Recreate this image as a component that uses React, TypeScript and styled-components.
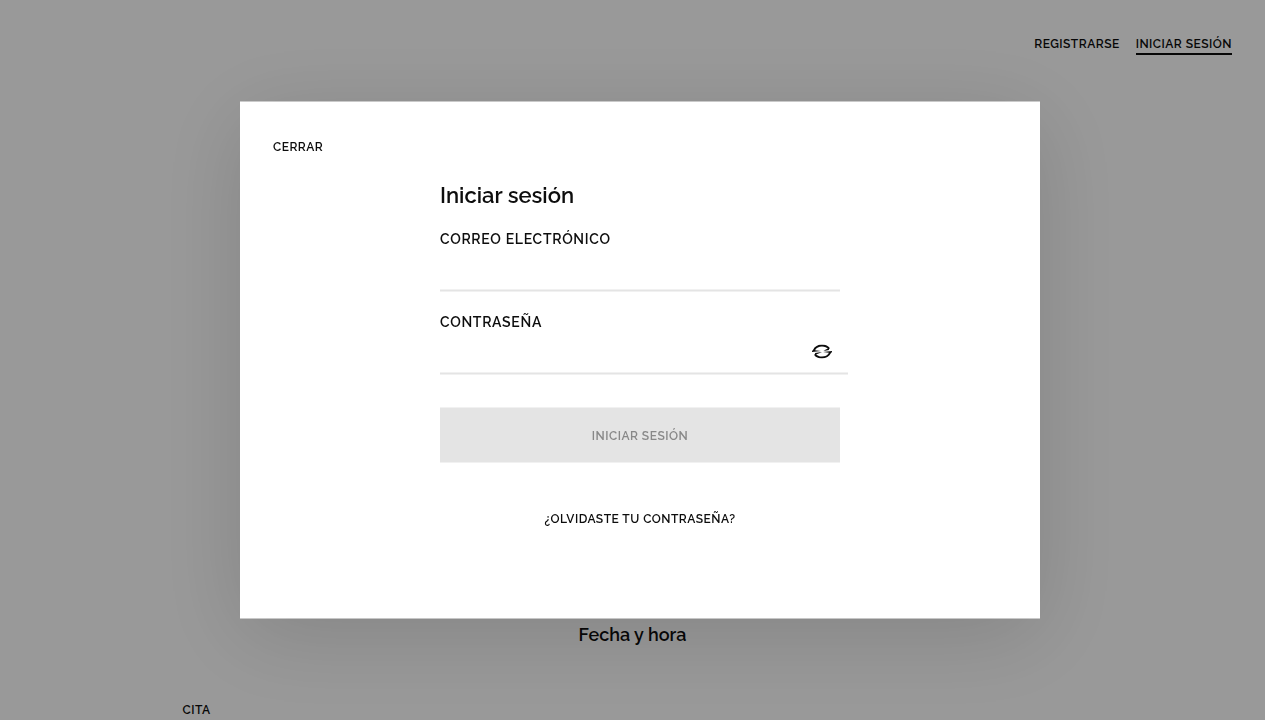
import React, { useId, useState } from "react";
import styled, { createGlobalStyle, css } from "styled-components";

const ink = "#0d0d0d";
const line = "#e4e4e4";

const GlobalStyle = createGlobalStyle`
  *, *::before, *::after { box-sizing: border-box; }
  body {
    margin: 0;
    background: #ffffff;
    color: ${ink};
    font-family: Raleway, Lato, "Open Sans", sans-serif;
    font-weight: 500;
    overflow: hidden;
  }
`;

const smallCaps = css`
  font-family: inherit;
  font-size: 12px;
  line-height: 16px;
  font-weight: 600;
  letter-spacing: 0.04em;
  text-transform: uppercase;
  color: ${ink};
`;

const Page = styled.div`
  height: 100vh;
  margin-right: 15px;
  overflow: hidden;
`;

const Header = styled.header`
  display: flex;
  justify-content: flex-end;
  padding: 36px 33px 0;
`;

const Nav = styled.nav`
  display: flex;
  gap: 16px;
`;

const NavLink = styled.a<{ $active?: boolean }>`
  ${smallCaps}
  padding-bottom: 1px;
  border-bottom: 2px solid ${(p) => (p.$active ? ink : "transparent")};
  text-decoration: none;
`;

const Booking = styled.main`
  max-width: 900px;
  margin: 0 auto;
  padding-top: 568px;
`;

const SectionTitle = styled.h2`
  margin: 0 0 55px;
  font-size: 18px;
  line-height: 24px;
  font-weight: 600;
  text-align: center;
`;

const SectionLabel = styled.h3`
  ${smallCaps}
  margin: 0;
`;

const Overlay = styled.div`
  position: fixed;
  inset: 0 15px 0 0;
  background: rgba(0, 0, 0, 0.4);
`;

const Dialog = styled.section`
  position: fixed;
  top: 50%;
  left: 50%;
  transform: translate(-50%, -50%);
  width: 800px;
  max-width: 100%;
  padding: 37px 33px 92px;
  background: #ffffff;
  box-shadow: 0 16px 84px rgba(0, 0, 0, 0.14);
`;

const TextButton = styled.button`
  ${smallCaps}
  display: block;
  padding: 0;
  border: 0;
  background: none;
  cursor: pointer;
`;

const Form = styled.form`
  width: 400px;
  max-width: 100%;
  margin: 24px auto 0;
`;

const Title = styled.h1`
  margin: 0 0 18px;
  font-size: 22px;
  line-height: 32px;
  font-weight: 600;
`;

const Field = styled.div`
  margin-bottom: 20px;
`;

const Label = styled.label`
  display: block;
  font-size: 14px;
  line-height: 20px;
  font-weight: 600;
  letter-spacing: 0.05em;
  text-transform: uppercase;
`;

const InputRow = styled.div<{ $wide?: boolean }>`
  display: flex;
  align-items: center;
  height: 43px;
  margin-right: ${(p) => (p.$wide ? "-8px" : "0")};
  padding-right: ${(p) => (p.$wide ? "16px" : "0")};
  border-bottom: 2px solid ${line};
`;

const Input = styled.input`
  flex: 1;
  min-width: 0;
  height: 100%;
  padding: 0;
  border: 0;
  outline: 0;
  background: transparent;
  font: inherit;
  font-size: 16px;
`;

const IconButton = styled.button`
  display: flex;
  padding: 0 0 2px;
  border: 0;
  background: none;
  cursor: pointer;
`;

const Submit = styled.button`
  ${smallCaps}
  width: 100%;
  height: 55px;
  margin-top: 13px;
  border: 0;
  background: ${line};
  color: #888888;
`;

const Forgot = styled.a`
  ${smallCaps}
  display: block;
  width: fit-content;
  margin: 48px auto 0;
  text-decoration: none;
`;

const EyeIcon = () => (
  <svg width="20" height="14" viewBox="0 0 20 14" fill={ink} aria-hidden="true">
    <path d="M1 5.400C2.600 1.900 6 0 10 0c3.600 0 6.400 1.300 8 3.800l-1.800 1C15 2.900 12.800 2 10 2 6.800 2 4.600 3.100 3 5.800L9 6.400 0 7.600V6.400z" />
    <path d="M19 8.600C17.400 12.100 14 14 10 14c-3.600 0-6.400-1.300-8-3.800l1.800-1C5 11.100 7.200 12 10 12c3.200 0 5.400-1.100 7-3.800L11 7.600l9-1.200v1.200z" />
    <path d="M3 8.500 10 7.400 7.200 8.800 3.200 10.200zM17 5.500 11.500 6.400 13.800 5 16.800 3.800z" />
  </svg>
);

export default function App() {
  const id = useId();
  const [email, setEmail] = useState("");
  const [password, setPassword] = useState("");
  const [visible, setVisible] = useState(false);

  return (
    <>
      <GlobalStyle />
      <Page>
        <Header>
          <Nav>
            <NavLink href="#registro">Registrarse</NavLink>
            <NavLink href="#sesion" $active>Iniciar sesión</NavLink>
          </Nav>
        </Header>
        <Booking>
          <SectionTitle>Fecha y hora</SectionTitle>
          <SectionLabel>Cita</SectionLabel>
        </Booking>
      </Page>
      <Overlay />
      <Dialog role="dialog" aria-modal="true" aria-labelledby={`${id}-title`}>
        <TextButton type="button">Cerrar</TextButton>
        <Form onSubmit={(e) => e.preventDefault()}>
          <Title id={`${id}-title`}>Iniciar sesión</Title>
          <Field>
            <Label htmlFor={`${id}-email`}>Correo electrónico</Label>
            <InputRow>
              <Input id={`${id}-email`} type="email" value={email} onChange={(e) => setEmail(e.target.value)} />
            </InputRow>
          </Field>
          <Field>
            <Label htmlFor={`${id}-password`}>Contraseña</Label>
            <InputRow $wide>
              <Input
                id={`${id}-password`}
                type={visible ? "text" : "password"}
                value={password}
                onChange={(e) => setPassword(e.target.value)}
              />
              <IconButton type="button" aria-label="Mostrar contraseña" onClick={() => setVisible(!visible)}>
                <EyeIcon />
              </IconButton>
            </InputRow>
          </Field>
          <Submit type="submit" disabled={!email || !password}>Iniciar sesión</Submit>
          <Forgot href="#recuperar">¿Olvidaste tu contraseña?</Forgot>
        </Form>
      </Dialog>
    </>
  );
}
